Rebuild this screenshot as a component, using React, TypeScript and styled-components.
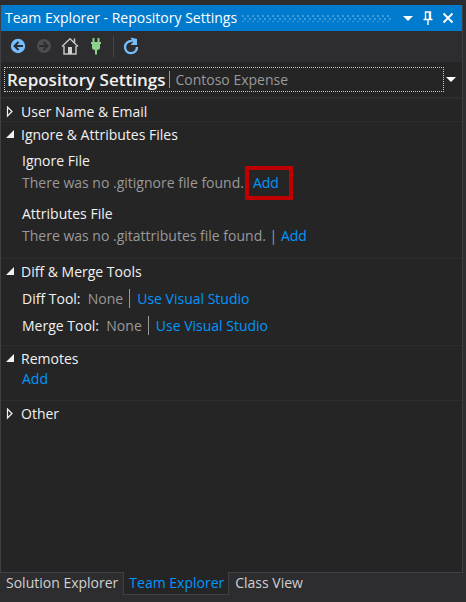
import React from "react";
import styled, { createGlobalStyle } from "styled-components";

const GlobalStyle = createGlobalStyle`
  * { box-sizing: border-box; }
  body {
    margin: 0;
    background: #2d2d30;
    color: #f1f1f1;
    font: 14px/22px "Open Sans", "Noto Sans", sans-serif;
  }
  button { font: inherit; color: inherit; background: none; border: 0; padding: 0; }
  svg { display: block; }
`;

const ToolWindow = styled.main`
  display: flex;
  flex-direction: column;
  min-height: 100vh;
  padding: 5px 3px 7px 0;
`;

const Panel = styled.section`
  flex: 1;
  display: flex;
  flex-direction: column;
  background: #252526;
  border: 1px solid #3f3f46;
  border-top: 0;
`;

const TitleBar = styled.header`
  display: flex;
  align-items: center;
  height: 26px;
  padding: 0 7px 0 4px;
  background: #007acc;
  color: #ffffff;
  white-space: nowrap;
`;

const Title = styled.h1`
  margin: 0;
  font-size: 14px;
  font-weight: 400;
`;

const Grip = styled.div`
  flex: 1;
  height: 7px;
  margin: 0 9px 0 5px;
  background-image:
    radial-gradient(circle at 1px 1px, #409bd8 1px, transparent 1px),
    radial-gradient(circle at 3px 4px, #409bd8 1px, transparent 1px);
  background-size: 5px 6px;
`;

const TitleActions = styled.div`
  display: flex;
  gap: 6px;
`;

const IconButton = styled.button`
  display: grid;
  place-items: center;
  width: 14px;
  height: 18px;
`;

const Toolbar = styled.div`
  display: flex;
  align-items: center;
  gap: 6px;
  height: 31px;
  padding: 0 7px 1px;
  background: #2d2d30;
`;

const ToolButton = styled.button`
  display: grid;
  place-items: center;
  width: 20px;
  height: 24px;
`;

const ToolSeparator = styled.span`
  width: 1px;
  height: 21px;
  margin: 0 1px;
  background: #46464a;
`;

const PageHeader = styled.div`
  display: flex;
  align-items: center;
  height: 37px;
  padding: 0 4px 0 3px;
  border-bottom: 2px solid #2d2d30;
`;

const PageTitle = styled.div`
  flex: 1;
  display: flex;
  align-items: center;
  height: 25px;
  padding: 0 2px;
  border: 1px dotted #c8c8c8;
  white-space: nowrap;
`;

const PageName = styled.h2`
  margin: 0;
  font-size: 17px;
  font-weight: 600;
`;

const Divider = styled.span<{ $tall?: boolean }>`
  width: 1px;
  height: ${(p) => (p.$tall ? 19 : 17)}px;
  margin: ${(p) => (p.$tall ? "0 7px 0 6px" : "0 5px 0 4px")};
  background: #999999;
`;

const Muted = styled.span`
  color: #999999;
`;

const Group = styled.section`
  padding-top: 4px;
  border-bottom: 1px solid #2d2d30;
  &:last-child { border-bottom: 0; }
`;

const GroupTitle = styled.h3`
  margin: 0;
  font-size: 14px;
  line-height: 18px;
  font-weight: 500;
`;

const GroupToggle = styled.button`
  display: flex;
  align-items: center;
  gap: 6px;
  height: 18px;
  padding-left: 4px;
`;

const GroupBody = styled.div<{ $top: number; $bottom: number }>`
  padding: ${(p) => p.$top}px 8px ${(p) => p.$bottom}px 21px;
`;

const FileEntry = styled.div`
  & + & { margin-top: 9px; }
`;

const FileName = styled.h4`
  margin: 0;
  font-size: 14px;
  font-weight: 400;
`;

const Line = styled.div<{ $height?: number }>`
  display: flex;
  align-items: center;
  height: ${(p) => p.$height ?? 22}px;
  white-space: pre;
`;

const Link = styled.a`
  color: #0097fb;
  text-decoration: none;
`;

const Highlight = styled.span`
  position: relative;
  margin-left: 9px;
  &::after {
    content: "";
    position: absolute;
    inset: -6px -14px -6px -8px;
    border: 4px solid #c00000;
    pointer-events: none;
  }
`;

const Tabs = styled.nav`
  display: flex;
  height: 23px;
  margin-top: -1px;
`;

const Tab = styled.button<{ $active?: boolean }>`
  height: 23px;
  padding: 0 4px 0 5px;
  line-height: 22px;
  white-space: nowrap;
  color: ${(p) => (p.$active ? "#0097fb" : "#d0d0d0")};
  background: ${(p) => (p.$active ? "#252526" : "transparent")};
  border: solid ${(p) => (p.$active ? "#3f3f46" : "transparent")};
  border-width: 0 1px 1px;
`;

const CaretDown = () => (
  <svg width="10" height="5" viewBox="0 0 10 5"><path d="M0 0h10L5 5z" fill="#fff" /></svg>
);

const Expander = ({ open }: { open: boolean }) => (
  <svg width="10" height="12" viewBox="0 0 10 12">
    {open ? (
      <path d="M9 1v8H1z" fill="#f1f1f1" />
    ) : (
      <path d="M2.500 1v9L7 5.500z" fill="none" stroke="#f1f1f1" strokeWidth="1.200" />
    )}
  </svg>
);

type GroupProps = { title: string; open?: boolean; top?: number; bottom?: number; children?: React.ReactNode };

const SettingsGroup = ({ title, open = false, top = 0, bottom = 0, children }: GroupProps) => (
  <Group>
    <GroupTitle>
      <GroupToggle aria-expanded={open}><Expander open={open} />{title}</GroupToggle>
    </GroupTitle>
    {open && <GroupBody $top={top} $bottom={bottom}>{children}</GroupBody>}
  </Group>
);

const ToolLine = ({ label }: { label: string }) => (
  <Line $height={27}>
    {label}{"  "}<Muted>None</Muted><Divider $tall /><Link href="#use-visual-studio">Use Visual Studio</Link>
  </Line>
);

export default function App() {
  return (
    <>
      <GlobalStyle />
      <ToolWindow>
        <Panel>
          <TitleBar>
            <Title>Team Explorer - Repository Settings</Title>
            <Grip />
            <TitleActions>
              <IconButton aria-label="Window options"><CaretDown /></IconButton>
              <IconButton aria-label="Pin">
                <svg width="10" height="14" viewBox="0 0 10 14">
                  <path d="M2.500 8V1H7.500V8M0.500 8.500H9.500M5 9V14" fill="none" stroke="#fff" strokeWidth="1.400" />
                  <path d="M5.800 1H8V8H5.800z" fill="#fff" />
                </svg>
              </IconButton>
              <IconButton aria-label="Close">
                <svg width="12" height="12" viewBox="0 0 12 12">
                  <path d="M1.500 1.500l9 9M10.500 1.500l-9 9" stroke="#fff" strokeWidth="1.800" />
                </svg>
              </IconButton>
            </TitleActions>
          </TitleBar>
          <Toolbar>
            <ToolButton aria-label="Back">
              <svg width="16" height="16" viewBox="0 0 16 16">
                <circle cx="8" cy="8" r="7.200" fill="#75bfff" />
                <path d="M13 8H4.500M8.500 4L4.500 8l4 4" fill="none" stroke="#2d2d30" strokeWidth="2" />
              </svg>
            </ToolButton>
            <ToolButton aria-label="Forward" disabled>
              <svg width="16" height="16" viewBox="0 0 16 16">
                <circle cx="8" cy="8" r="7" fill="#4d4d50" />
                <path d="M3 8h8.500M7.500 4l4 4-4 4" fill="none" stroke="#2d2d30" strokeWidth="2" />
              </svg>
            </ToolButton>
            <ToolButton aria-label="Home">
              <svg width="18" height="18" viewBox="0 0 18 18">
                <path d="M1 9.500L9 1.700l8 7.800M3 9v8h12V9M13.500 5.500V1.500" fill="none" stroke="#c4c4c4" strokeWidth="1.500" />
                <path d="M7 10h4v7H7z" fill="#d0d0d0" />
              </svg>
            </ToolButton>
            <ToolButton aria-label="Manage connections">
              <svg width="12" height="18" viewBox="0 0 12 18">
                <path d="M2.500 1h2v4h3V1h2v4H11v2h-1v4.500L8 13H7v4.500H5V13H4l-2-1.500V7H1V5h1.500z" fill="#8dd28a" />
              </svg>
            </ToolButton>
            <ToolSeparator />
            <ToolButton aria-label="Refresh">
              <svg width="16" height="18" viewBox="0 0 16 18">
                <path d="M9 4.300A6 6 0 1 0 14 10" fill="none" stroke="#75bfff" strokeWidth="2.300" />
                <path d="M7.500 0.500L14 2V8H7.500L10 5.500z" fill="#75bfff" />
              </svg>
            </ToolButton>
          </Toolbar>
          <PageHeader>
            <PageTitle>
              <PageName>Repository Settings</PageName>
              <Divider />
              <Muted>Contoso Expense</Muted>
            </PageTitle>
            <IconButton aria-label="Switch page"><CaretDown /></IconButton>
          </PageHeader>
          <SettingsGroup title="User Name &amp; Email" />
          <SettingsGroup title="Ignore &amp; Attributes Files" open top={6} bottom={11}>
            <FileEntry>
              <FileName>Ignore File</FileName>
              <Line>
                <Muted>There was no .gitignore file found.</Muted>
                <Highlight><Link href="#add-ignore">Add</Link></Highlight>
              </Line>
            </FileEntry>
            <FileEntry>
              <FileName>Attributes File</FileName>
              <Line>
                <Muted>There was no .gitattributes file found. | </Muted>
                <Link href="#add-attributes">Add</Link>
              </Line>
            </FileEntry>
          </SettingsGroup>
          <SettingsGroup title="Diff &amp; Merge Tools" open top={4} bottom={6}>
            <ToolLine label="Diff Tool:" />
            <ToolLine label="Merge Tool:" />
          </SettingsGroup>
          <SettingsGroup title="Remotes" open bottom={10}>
            <Line><Link href="#add-remote">Add</Link></Line>
          </SettingsGroup>
          <SettingsGroup title="Other" />
        </Panel>
        <Tabs aria-label="Tool windows">
          <Tab>Solution Explorer</Tab>
          <Tab $active aria-current="page">Team Explorer</Tab>
          <Tab>Class View</Tab>
        </Tabs>
      </ToolWindow>
    </>
  );
}
